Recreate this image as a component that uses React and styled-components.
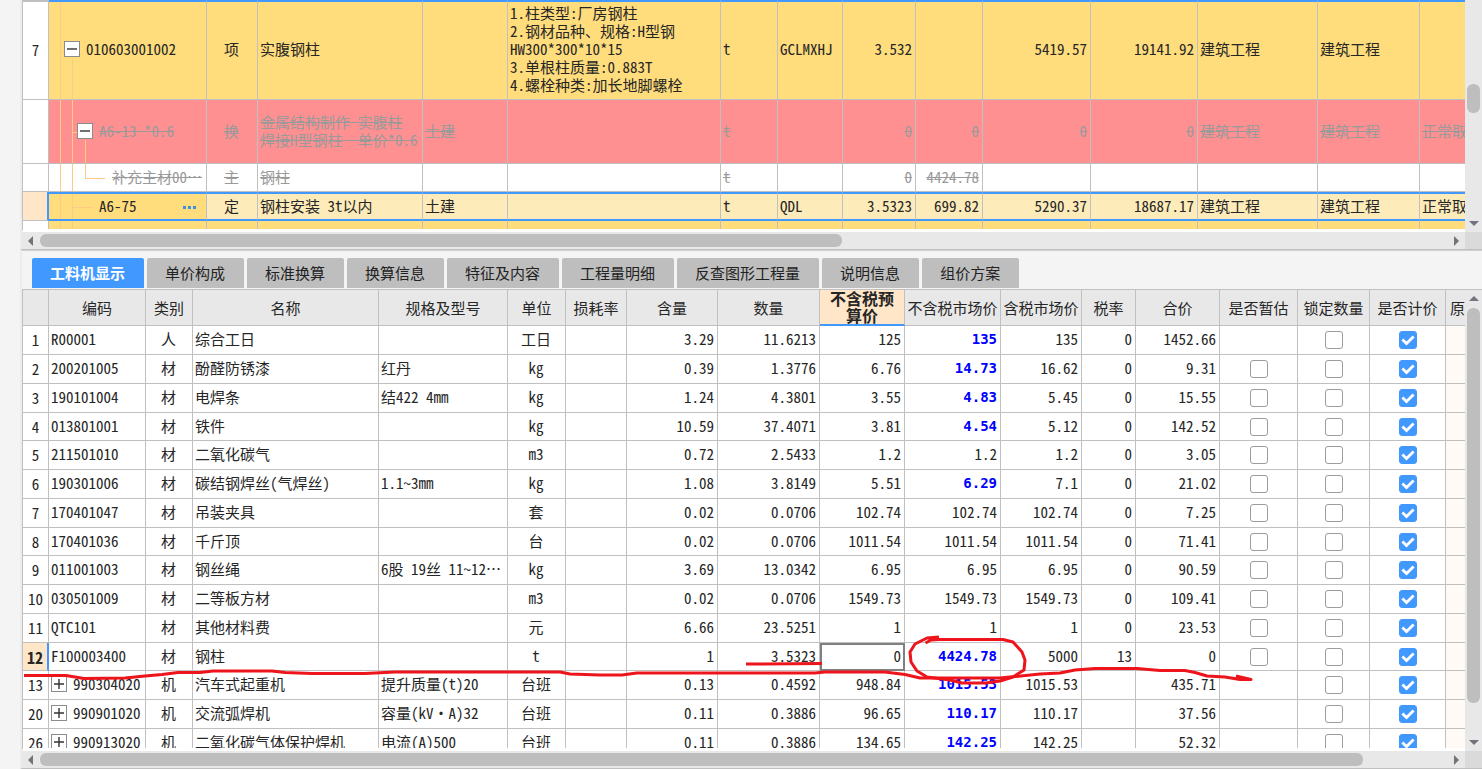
import React from "react";
import styled, { createGlobalStyle, css } from "styled-components";

const color = {
  page: "#f4f4f4",
  line: "#c0c0c0",
  track: "#e8e8e8",
  thumb: "#bebebe",
  corner: "#dadada",
  blue: "#4199ff",
  amber: "#ffdc7c",
  amberLight: "#fdebb9",
  red: "#ff9091",
  peach: "#ffe6c8",
  guide: "#ffca85",
  text: "#262626",
  muted: "#9a9a9a",
  price: "#0000ff",
  ink: "#ee141b",
};

const GlobalStyle = createGlobalStyle`
  * { box-sizing: border-box; }
  body {
    margin: 0;
    background: ${color.page};
    color: ${color.text};
    font: 15px/18px "Noto Sans Mono CJK SC", "Noto Sans CJK SC", monospace;
  }
  button { font: inherit; color: inherit; }
`;

const Screen = styled.main`
  position: relative;
  display: flex;
  flex-direction: column;
  height: 100vh;
  padding-left: 20px;
  overflow: hidden;
`;

const Pane = styled.section`
  display: flex;
  flex-direction: column;
  min-height: 0;
  border-left: 2px solid #ececec;
  border-bottom: 1px solid ${color.line};
  flex: ${(p) => (p.$height ? `0 0 ${p.$height}px` : "1 1 0")};
`;

const PaneBody = styled.div`
  display: flex;
  flex: 1;
  min-height: 0;
`;

const Viewport = styled.div`
  flex: 1;
  min-width: 0;
  overflow: hidden;
  border-left: 1px solid ${color.line};
  border-bottom: 3px solid #fff;
`;

const Sheet = styled.table`
  width: 100%;
  table-layout: fixed;
  border-collapse: separate;
  border-spacing: 0;
`;

const Cell = styled.td`
  position: relative;
  padding: 0 3px 2px 2px;
  border-right: 1px solid ${color.line};
  border-bottom: 1px solid ${color.line};
  text-align: ${(p) => p.$align || "left"};
  white-space: ${(p) => (p.$wrap ? "pre-wrap" : "nowrap")};
  overflow: hidden;
  &:last-child { border-right: 0; }
  ${(p) => p.$strong && css`
    color: ${color.price};
    font-family: "DejaVu Sans Mono", monospace;
    font-size: 14px;
    font-weight: 700;
  `}
  ${(p) => p.$focused && css`
    outline: 2px solid #808080;
    outline-offset: -2px;
  `}
  ${(p) => p.$tinted && css`background: #fffaf5;`}
`;

const CheckCell = styled(Cell)`
  padding: 0;
`;

const RowNumber = styled.th`
  padding: 0;
  border-right: 1px solid ${color.line};
  border-bottom: 1px solid ${color.line};
  background: #fff;
  font-weight: 400;
  text-align: center;
  ${(p) => p.$current && css`
    border-right: 2px solid ${color.blue};
    background: ${color.peach};
    font-size: 16px;
    font-weight: 700;
  `}
`;

const tones = {
  item: css`background: ${color.amber};`,
  swapped: css`background: ${color.red}; color: ${color.muted};`,
  removed: css`background: #fff; color: ${color.muted};`,
  current: css`background: ${color.amberLight};`,
};

const QuotaRow = styled.tr`
  height: ${(p) => p.$height}px;
  ${(p) => tones[p.$tone]}
  ${(p) => (p.$tone === "swapped" || p.$tone === "removed") && css`
    ${Cell} { text-decoration: line-through; }
  `}
  ${(p) => p.$tone === "current" && css`
    ${Cell} {
      border-top: 2px solid ${color.blue};
      border-bottom: 2px solid ${color.blue};
    }
  `}
  ${(p) => p.$first && css`
    ${Cell} { border-top: 2px solid ${color.blue}; padding-bottom: 4px; }
    ${RowNumber} { border-top: 2px solid ${color.line}; padding-bottom: 2px; }
  `}
`;

const TreeCell = styled(Cell)`
  padding-left: ${(p) => p.$indent}px;
  ${(p) => p.$solid && css`background: ${color.amber};`}
`;

const TreeLabel = styled.div`
  display: flex;
  align-items: center;
  gap: 6px;
`;

const Guide = styled.span`
  position: absolute;
  left: ${(p) => p.$x}px;
  top: ${(p) => p.$from || "0"};
  bottom: ${(p) => p.$to || "0"};
  border-left: 1px solid ${color.guide};
`;

const Branch = styled.span`
  position: absolute;
  left: ${(p) => p.$x}px;
  top: 50%;
  width: ${(p) => p.$length}px;
  border-top: 1px solid ${color.guide};
`;

const Toggle = styled.button`
  flex: none;
  display: grid;
  place-items: center;
  width: 16px;
  height: 16px;
  padding: 0;
  border: 1px solid #8c8c8c;
  background: #fff;
`;

const MoreButton = styled.button`
  margin-left: auto;
  margin-right: 6px;
  padding: 0;
  border: 0;
  background: none;
  line-height: 0;
`;

const Tabs = styled.nav`
  display: flex;
  gap: 3px;
  padding: 7px 0 0 10px;
  height: 39px;
  flex: none;
  border-top: 1px solid #d0d0d0;
`;

const Tab = styled.button`
  height: 30px;
  padding: 0 19px 0 18px;
  border: 0;
  border-radius: 2px 2px 0 0;
  background: ${(p) => (p.$active ? color.blue : color.thumb)};
  color: ${(p) => (p.$active ? "#fff" : "#222")};
  font-family: "Noto Sans CJK SC", sans-serif;
  font-weight: ${(p) => (p.$active ? 700 : 400)};
  white-space: nowrap;
`;

const ResourceArea = styled(PaneBody)`
  border-top: 1px solid ${color.line};
`;

const HeaderRow = styled.tr`
  height: 36px;
`;

const HeaderCell = styled.th`
  padding: 0;
  border-right: 1px solid ${color.line};
  border-bottom: 1px solid ${color.line};
  background: ${color.track};
  font-weight: 400;
  line-height: 17px;
  white-space: nowrap;
  &:last-child { border-right: 0; padding-left: 4px; text-align: left; }
  ${(p) => p.$active && css`
    border-bottom: 2px solid ${color.blue};
    background: ${color.peach};
    padding: 0 8px;
    font-size: 16px;
    font-weight: 700;
    white-space: normal;
  `}
`;

const ResourceRow = styled.tr`
  height: 29px;
  background: #fff;
  &:nth-child(4n) { height: 28px; }
`;

const CheckLabel = styled.label`
  display: grid;
  place-items: center;
  > * { grid-area: 1 / 1; }
`;

const CheckInput = styled.input`
  appearance: none;
  width: 18px;
  height: 18px;
  margin: 0;
  border: 1px solid #9c9c9c;
  border-radius: 3px;
  background: #fff;
  &:checked { border-color: ${color.blue}; background: ${color.blue}; }
`;

const CheckMark = styled.svg`
  width: 18px;
  height: 18px;
  pointer-events: none;
`;

const ScrollX = styled.div`
  display: flex;
  flex: none;
  height: 17px;
  background: ${color.track};
`;

const TrackX = styled.div`
  flex: 1;
  display: flex;
  align-items: center;
  gap: 7px;
  padding: 0 6px;
`;

const RailX = styled.div`
  flex: 1;
  height: 13px;
`;

const ThumbX = styled.div`
  width: ${(p) => p.$size}%;
  height: 13px;
  border-radius: 6px;
  background: ${color.thumb};
`;

const ScrollCorner = styled.div`
  width: 17px;
  background: ${color.corner};
`;

const ScrollY = styled.div`
  display: flex;
  flex-direction: column;
  align-items: center;
  gap: 7px;
  flex: none;
  width: 17px;
  padding: ${(p) => p.$pad};
  background: ${color.track};
`;

const RailY = styled.div`
  flex: 1;
  min-height: 0;
  padding-top: ${(p) => p.$offset || 0}px;
`;

const ThumbY = styled.div`
  width: 13px;
  height: ${(p) => p.$size};
  border-radius: 6px;
  background: ${color.thumb};
`;

const Ink = styled.svg`
  position: absolute;
  left: 0;
  top: 0;
  width: 1300px;
  height: 700px;
  pointer-events: none;
`;

const arrows = {
  left: [5, 10, "M5 0v10L0 5z"],
  right: [5, 10, "M0 0v10l5-5z"],
  up: [10, 5, "M0 5h10L5 0z"],
  down: [10, 5, "M0 0h10L5 5z"],
};

function Arrow({ to }) {
  const [w, h, d] = arrows[to];
  return (
    <svg width={w} height={h} aria-hidden="true">
      <path d={d} fill="#73737b" />
    </svg>
  );
}

function HorizontalScroll({ size }) {
  return (
    <ScrollX>
      <TrackX>
        <Arrow to="left" />
        <RailX><ThumbX $size={size} /></RailX>
        <Arrow to="right" />
      </TrackX>
      <ScrollCorner />
    </ScrollX>
  );
}

function ToggleBox({ open }) {
  return (
    <Toggle type="button" aria-label={open ? "收起" : "展开"}>
      <svg width="10" height="10" aria-hidden="true">
        <path d={open ? "M0 5h10" : "M0 5h10M5 0v10"} stroke="#333" strokeWidth="1.4" />
      </svg>
    </Toggle>
  );
}

function Check({ label, checked }) {
  return (
    <CheckLabel>
      <CheckInput type="checkbox" defaultChecked={checked} aria-label={label} />
      {checked && (
        <CheckMark viewBox="0 0 18 18" aria-hidden="true">
          <path d="M3.400 8.500 7.500 12.600 14.600 5.500" fill="none" stroke="#fff" strokeWidth="2.8" />
        </CheckMark>
      )}
    </CheckLabel>
  );
}

const Columns = ({ widths }) => (
  <colgroup>
    {widths.map((w, i) => <col key={i} width={w} />)}
    <col />
  </colgroup>
);

const quotaWidths = [26, 158, 51, 165, 85, 213, 57, 65, 73, 67, 108, 107, 120, 102];
const quotaAlign = ["center", "left", "left", "left", "left", "left", "right", "right", "right", "right"];

const quotaRows = [
  {
    no: "7", height: 100, tone: "item", indent: 15, code: "010603001002", open: true,
    guides: [[11], [23, "calc(50% + 8px)"]], branch: [11, 4],
    cells: ["项", "实腹钢柱", "",
      "1.柱类型:厂房钢柱\n2.钢材品种、规格:H型钢\nHW300*300*10*15\n3.单根柱质量:0.883T\n4.螺栓种类:加长地脚螺栓",
      "t", "GCLMXHJ", "3.532", "", "5419.57", "19141.92", "建筑工程", "建筑工程", ""],
  },
  {
    no: "", height: 64, tone: "swapped", indent: 28, code: "A6-13 *0.6", open: true,
    guides: [[11], [23], [36, "calc(50% + 8px)"]], branch: [23, 5],
    cells: ["换", "金属结构制作 实腹柱\n焊接H型钢柱  单价*0.6", "土建", "", "t", "", "0", "0", "0", "0", "建筑工程", "建筑工程", "正常取"],
  },
  {
    no: "", height: 28, tone: "removed", indent: 63, code: "补充主材00…",
    guides: [[11], [23], [36, "0", "50%"]], branch: [36, 20],
    cells: ["主", "钢柱", "", "", "t", "", "0", "4424.78", "", "", "", "", ""],
  },
  {
    no: "", height: 29, tone: "current", indent: 50, code: "A6-75", more: true,
    guides: [[11], [23]], branch: [23, 21],
    cells: ["定", "钢柱安装 3t以内", "土建", "", "t", "QDL", "3.5323", "699.82", "5290.37", "18687.17", "建筑工程", "建筑工程", "正常取"],
  },
  {
    no: "", height: 29, tone: "item", indent: 50, code: "", guides: [[11], [23]],
    cells: ["", "", "", "", "", "", "", "", "", "", "", "", ""],
  },
];

const tabs = ["工料机显示", "单价构成", "标准换算", "换算信息", "特征及内容", "工程量明细", "反查图形工程量", "说明信息", "组价方案"];

const resourceWidths = [26, 97, 47, 186, 129, 58, 61, 91, 102, 85, 96, 81, 54, 84, 78, 72, 76];
const resourceHeads = ["", "编码", "类别", "名称", "规格及型号", "单位", "损耗率", "含量", "数量", "不含税预算价", "不含税市场价", "含税市场价", "税率", "合价", "是否暂估", "锁定数量", "是否计价", "原"];

// no, code, kind, name, spec, unit, content, amount, budget, market, market with tax, rate, total
const resources = [
  ["1", "R00001", "人", "综合工日", "", "工日", "3.29", "11.6213", "125", "135", "135", "0", "1452.66"],
  ["2", "200201005", "材", "酚醛防锈漆", "红丹", "kg", "0.39", "1.3776", "6.76", "14.73", "16.62", "0", "9.31"],
  ["3", "190101004", "材", "电焊条", "结422 4mm", "kg", "1.24", "4.3801", "3.55", "4.83", "5.45", "0", "15.55"],
  ["4", "013801001", "材", "铁件", "", "kg", "10.59", "37.4071", "3.81", "4.54", "5.12", "0", "142.52"],
  ["5", "211501010", "材", "二氧化碳气", "", "m3", "0.72", "2.5433", "1.2", "1.2", "1.2", "0", "3.05"],
  ["6", "190301006", "材", "碳结钢焊丝(气焊丝)", "1.1~3mm", "kg", "1.08", "3.8149", "5.51", "6.29", "7.1", "0", "21.02"],
  ["7", "170401047", "材", "吊装夹具", "", "套", "0.02", "0.0706", "102.74", "102.74", "102.74", "0", "7.25"],
  ["8", "170401036", "材", "千斤顶", "", "台", "0.02", "0.0706", "1011.54", "1011.54", "1011.54", "0", "71.41"],
  ["9", "011001003", "材", "钢丝绳", "6股 19丝 11~12…", "kg", "3.69", "13.0342", "6.95", "6.95", "6.95", "0", "90.59"],
  ["10", "030501009", "材", "二等板方材", "", "m3", "0.02", "0.0706", "1549.73", "1549.73", "1549.73", "0", "109.41"],
  ["11", "QTC101", "材", "其他材料费", "", "元", "6.66", "23.5251", "1", "1", "1", "0", "23.53"],
  ["12", "F100003400", "材", "钢柱", "", "t", "1", "3.5323", "0", "4424.78", "5000", "13", "0"],
  ["13", "990304020", "机", "汽车式起重机", "提升质量(t)20", "台班", "0.13", "0.4592", "948.84", "1015.53", "1015.53", "", "435.71"],
  ["20", "990901020", "机", "交流弧焊机", "容量(kV·A)32", "台班", "0.11", "0.3886", "96.65", "110.17", "110.17", "", "37.56"],
  ["26", "990913020", "机", "二氧化碳气体保护焊机", "电流(A)500", "台班", "0.11", "0.3886", "134.65", "142.25", "142.25", "", "52.32"],
];

function QuotaTable() {
  return (
    <Sheet>
      <Columns widths={quotaWidths} />
      <tbody>
        {quotaRows.map((row, r) => (
          <QuotaRow key={r} $height={row.height} $tone={row.tone} $first={r === 0}>
            <RowNumber scope="row" $current={row.tone === "current"}>{row.no}</RowNumber>
            <TreeCell $indent={row.indent} $solid={row.tone === "current"}>
              {row.guides.map(([x, from, to]) => <Guide key={x} $x={x} $from={from} $to={to} />)}
              {row.branch && <Branch $x={row.branch[0]} $length={row.branch[1]} />}
              <TreeLabel>
                {row.open && <ToggleBox open />}
                <span>{row.code}</span>
                {row.more && (
                  <MoreButton type="button" aria-label="更多">
                    <svg width="14" height="3" aria-hidden="true">
                      <path d="M0 0h3v3H0zM5 0h3v3H5zM10 0h3v3h-3z" fill="#3d8fe0" />
                    </svg>
                  </MoreButton>
                )}
              </TreeLabel>
            </TreeCell>
            {row.cells.map((text, i) => (
              <Cell key={i} $align={quotaAlign[i]} $wrap={text.includes("\n")}>{text}</Cell>
            ))}
          </QuotaRow>
        ))}
      </tbody>
    </Sheet>
  );
}

function ResourceTable() {
  return (
    <Sheet>
      <Columns widths={resourceWidths} />
      <thead>
        <HeaderRow>
          {resourceHeads.map((h, i) => (
            <HeaderCell key={i} scope="col" $active={i === 9}>{h}</HeaderCell>
          ))}
        </HeaderRow>
      </thead>
      <tbody>
        {resources.map(([no, code, kind, name, spec, unit, content, amount, budget, market, taxed, rate, total]) => {
          const current = no === "12";
          const machine = kind === "机";
          return (
            <ResourceRow key={no}>
              <RowNumber scope="row" $current={current}>{no}</RowNumber>
              <Cell>
                <TreeLabel>
                  {machine && <ToggleBox />}
                  <span>{code}</span>
                </TreeLabel>
              </Cell>
              <Cell $align="center">{kind}</Cell>
              <Cell>{name}</Cell>
              <Cell>{spec}</Cell>
              <Cell $align="center">{unit}</Cell>
              <Cell />
              <Cell $align="right">{content}</Cell>
              <Cell $align="right">{amount}</Cell>
              <Cell $align="right" $focused={current}>{budget}</Cell>
              <Cell $align="right" $strong={market !== budget}>{market}</Cell>
              <Cell $align="right">{taxed}</Cell>
              <Cell $align="right">{rate}</Cell>
              <Cell $align="right">{total}</Cell>
              <CheckCell>{kind === "材" && <Check label={`${name} 是否暂估`} />}</CheckCell>
              <CheckCell><Check label={`${name} 锁定数量`} /></CheckCell>
              <CheckCell><Check label={`${name} 是否计价`} checked /></CheckCell>
              <Cell $tinted />
            </ResourceRow>
          );
        })}
      </tbody>
    </Sheet>
  );
}

export default function App() {
  return (
    <>
      <GlobalStyle />
      <Screen>
        <Pane $height={250}>
          <PaneBody>
            <Viewport><QuotaTable /></Viewport>
            <ScrollY $pad="0 0 6px">
              <RailY $offset={84}><ThumbY $size="29px" /></RailY>
              <Arrow to="down" />
            </ScrollY>
          </PaneBody>
          <HorizontalScroll size={57} />
        </Pane>
        <Pane>
          <Tabs aria-label="明细">
            {tabs.map((t, i) => <Tab key={t} type="button" $active={i === 0}>{t}</Tab>)}
          </Tabs>
          <ResourceArea>
            <Viewport><ResourceTable /></Viewport>
            <ScrollY $pad="6px 0">
              <Arrow to="up" />
              <RailY><ThumbY $size="93%" /></RailY>
              <Arrow to="down" />
            </ScrollY>
          </ResourceArea>
          <HorizontalScroll size={94} />
        </Pane>
        <Ink viewBox="0 0 1300 700" fill="none" stroke={color.ink} strokeWidth="3" strokeLinejoin="round" aria-hidden="true">
          <path d="M746 664 822 663.500" />
          <path d="M24 675.500H66L84 678.500 125 678 145 676 162 674.500 178 672.500H200L213 671H272L285 672.500 312 673.500H365L395 672H560L570 674 600 675H622L637 673H815L825 672H885L905 674.500 920 678H1000L1015 676.500 1040 674 1060 673 1075 670 1095 668.500H1137L1160 670.500H1185L1195 672.500 1207 676 1225 677 1240 679.500H1251L1236 676" />
          <path d="M939 637 927 638 915 644 910 652 911 662 917 671 927 677 950 680 962 683H986L1000 681 1013 677 1024 670 1025 660 1022 652 1013 642 1003 639.500H940L931 640 925.500 643" />
        </Ink>
      </Screen>
    </>
  );
}
